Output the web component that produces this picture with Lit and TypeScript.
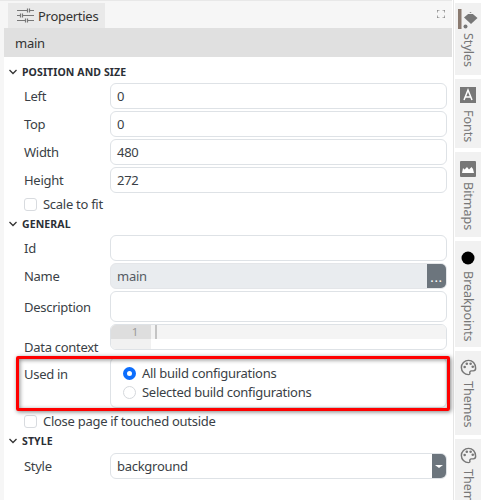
import { LitElement, html, css } from "lit";
import { customElement } from "lit/decorators.js";

const chevron = html`<svg class="chev" viewBox="0 0 10 10" width="10" height="10"><path d="M1.5 3l3.5 3.5L8.5 3" fill="none" stroke="#333" stroke-width="1.3"/></svg>`;
const palette = html`<svg viewBox="0 0 20 20" width="17" height="17"><path d="M10 1.6a8.4 8.4 0 1 0 0 16.8c1.3 0 1.9-.9 1.6-1.900-.4-1.300.3-2.500 1.800-2.500h2.200c1.600 0 2.800-1.200 2.800-3C18.400 5.300 14.700 1.600 10 1.600z" fill="none" stroke="#777" stroke-width="1.700"/><circle cx="5.500" cy="9.500" r="1.500" fill="#777"/><circle cx="8" cy="5.500" r="1.500" fill="#777"/><circle cx="12.500" cy="5.500" r="1.500" fill="#777"/><circle cx="15" cy="9" r="1.500" fill="#777"/></svg>`;

@customElement("app-root")
export class AppRoot extends LitElement {
  static styles = css`
    :host { display: block; width: 483px; height: 500px; overflow: hidden; position: relative; background: #fff; font-family: "Noto Sans", sans-serif; font-size: 13px; letter-spacing: -0.28px; color: #3a3f46; }
    .page { display: flex; height: 500px; }
    .main { width: 452px; flex: none; background: #f6f6f6; padding-top: 3px; box-sizing: border-box; display: flex; flex-direction: column; position: relative; }
    .topline { position: absolute; left: 0; right: 0; top: 0; height: 1px; background: #e8e8e8; }
    .tabs { height: 25px; flex: none; padding: 0 7px 0 8px; display: flex; align-items: stretch; justify-content: space-between; }
    .tab { width: 97px; background: #e9e9e9; display: flex; align-items: center; gap: 4px; padding-left: 9px; box-sizing: border-box; color: #333; }
    .expand { margin-top: 7px; }
    .body { margin-left: 4px; background: #fff; flex: 1; display: flex; flex-direction: column; min-height: 0; }
    .title { height: 29px; background: #e0e0e0; display: flex; align-items: center; padding-left: 11px; color: #333; flex: none; }
    .content { padding: 5px 5px 0 4px; display: flex; flex-direction: column; }
    .sec { height: 20px; display: flex; align-items: center; gap: 4px; font-weight: 700; font-size: 10.5px; letter-spacing: 0.1px; color: #2b2f36; }
    .form { display: grid; grid-template-columns: 102px 337px; row-gap: 2px; }
    .form.g1 { margin-top: 1px; }
    .form.g2 { margin-top: 2px; }
    .form label { padding-left: 16px; display: flex; align-items: center; color: #3a3f46; }
    .form label.bottom { align-items: flex-end; margin-bottom: -6px; }
    .form label.top { align-items: flex-start; padding-top: 8px; margin-top: 5px; }
    .inp { height: 26px; box-sizing: border-box; border: 1px solid #dee2e6; border-radius: 6px; padding-left: 6px; display: flex; align-items: center; background: #fff; color: #3a3f46; }
    .inp.tall { height: 31px; }
    .inp.ro { background: #e9ecef; border-color: #e4e6e9; overflow: hidden; padding-right: 0; justify-content: space-between; color: #555b63; }
    .dots { width: 19px; height: 26px; box-sizing: border-box; padding-top: 3px; background: #6c757d; color: #fff; display: flex; align-items: center; justify-content: center; font-size: 13px; letter-spacing: 0.6px; line-height: 1; flex: none; }
    .editor { height: 26px; box-sizing: border-box; border: 1px solid #dee2e6; border-radius: 6px; overflow: hidden; display: flex; background: #fff; }
    .gutter { width: 40px; background: #f1f1f1; flex: none; }
    .num { height: 14px; background: #dedede; color: #9a9a9a; font-size: 11.5px; text-align: right; padding-right: 13px; box-sizing: border-box; line-height: 14px; }
    .line { flex: 1; background: #f4f4f4; height: 14px; position: relative; }
    .line::before { content: ""; position: absolute; left: 4px; top: 0; width: 2px; height: 14px; background: #c4c4c4; }
    .radios { margin-top: 5px; height: 51px; box-sizing: border-box; border: 1px solid #dee2e6; border-radius: 6px; display: flex; flex-direction: column; justify-content: center; gap: 3px; padding-left: 12px; }
    .radio { display: flex; align-items: center; gap: 6px; height: 16px; }
    .dot { width: 13px; height: 13px; box-sizing: border-box; border: 1px solid #d5d8dc; border-radius: 50%; background: #fff; flex: none; }
    .dot.on { border: 4px solid #0d6efd; }
    .check { display: flex; align-items: center; gap: 6px; padding-left: 16px; height: 20px; }
    .check.c1 { margin-top: 1px; }
    .check.c2 { margin-top: 3px; }
    .cb { width: 13px; height: 13px; box-sizing: border-box; border: 1px solid #d8dbdf; border-radius: 3px; background: #fff; flex: none; }
    .sel { padding-right: 0; justify-content: space-between; overflow: hidden; }
    .caret { width: 14px; height: 26px; background: #6c757d; display: flex; align-items: center; justify-content: center; flex: none; }
    .caret::before { content: ""; border-left: 4px solid transparent; border-right: 4px solid transparent; border-top: 3px solid #fff; }
    .side { flex: 1; border-left: 1px solid #e6e6e6; margin-left: 1px; padding-left: 1px; display: flex; flex-direction: column; gap: 4px; padding-top: 3px; overflow: hidden; }
    .stab { background: #f1f1f1; width: 26px; flex: none; box-sizing: border-box; display: flex; flex-direction: column; align-items: center; padding-top: 8px; gap: 7px; color: #777; font-size: 12.5px; letter-spacing: 0; }
    .stab svg { flex: none; }
    .stab span { writing-mode: vertical-rl; line-height: 14px; }
    .s1 { height: 72px; padding-top: 6px; gap: 4px; }
    .s2 { height: 69px; }
    .s3 { height: 85px; padding-top: 9px; gap: 5px; }
    .s4 { height: 106px; padding-top: 10px; gap: 6px; }
    .s5 { height: 84px; gap: 5px; }
    .s6 { height: 70px; gap: 5px; }
    .annot { position: absolute; left: 16px; top: 356px; width: 434px; height: 55px; box-sizing: border-box; border: 3px solid #f00; border-radius: 2px; box-shadow: 1px 1px 4px rgba(0,0,0,.5), inset 1px 1px 4px rgba(0,0,0,.45); pointer-events: none; }
  `;

  private row(label: string, value: string) {
    return html`<label>${label}</label><div class="inp">${value}</div>`;
  }

  render() {
    return html`
      <div class="page">
        <div class="main">
          <div class="topline"></div>
          <div class="tabs">
            <div class="tab">
              <svg viewBox="0 0 17 15" width="17" height="15"><path d="M0 2.5h10M13 2.5h4M10.5 0.5v4M12.5 0.5v4M0 7.5h3M6 7.500h11M3.500 5.500v4M5.500 5.500v4M0 12.500h8M11 12.500h6M8.500 10.500v4M10.500 10.500v4" stroke="#777" stroke-width="1.200" fill="none"/></svg>
              Properties
            </div>
            <svg class="expand" viewBox="0 0 8 8" width="8" height="8"><path d="M0 2.500V0h2.500M5.500 0H8v2.500M8 5.500V8H5.500M2.500 8H0V5.500" fill="none" stroke="#777" stroke-width="1.200"/></svg>
          </div>
          <div class="body">
            <div class="title">main</div>
            <div class="content">
              <div class="sec">${chevron}POSITION AND SIZE</div>
              <div class="form g1">
                ${this.row("Left", "0")}
                ${this.row("Top", "0")}
                ${this.row("Width", "480")}
                ${this.row("Height", "272")}
              </div>
              <div class="check c1"><div class="cb"></div>Scale to fit</div>
              <div class="sec">${chevron}GENERAL</div>
              <div class="form g1">
                ${this.row("Id", "")}
                <label>Name</label>
                <div class="inp ro">main<div class="dots">...</div></div>
                <label>Description</label><div class="inp tall"></div>
                <label class="bottom">Data context</label>
                <div class="editor"><div class="gutter"><div class="num">1</div></div><div class="line"></div></div>
                <label class="top">Used in</label>
                <div class="radios">
                  <div class="radio"><div class="dot on"></div>All build configurations</div>
                  <div class="radio"><div class="dot"></div>Selected build configurations</div>
                </div>
              </div>
              <div class="check c2"><div class="cb"></div>Close page if touched outside</div>
              <div class="sec">${chevron}STYLE</div>
              <div class="form g2">
                <label>Style</label>
                <div class="inp sel">background<div class="caret"></div></div>
              </div>
            </div>
          </div>
        </div>
        <div class="side">
          <div class="stab s1">
            <svg viewBox="0 0 20 20" width="20" height="20"><rect x="0" y="0" width="3.500" height="20" fill="#8a7a70"/><path d="M12.500 3l7 6-6.500 6-7-6.500z" fill="#777"/><path d="M8.500 4.500h7" stroke="#f1f1f1"/><circle cx="7.500" cy="17.500" r="2" fill="#777"/></svg>
            <span>Styles</span>
          </div>
          <div class="stab s2">
            <svg viewBox="0 0 16 16" width="16" height="16"><rect width="16" height="16" fill="#777"/><path d="M4 13L8 3l4 10M5.500 10h5" stroke="#fff" stroke-width="1.500" fill="none"/></svg>
            <span>Fonts</span>
          </div>
          <div class="stab s3">
            <svg viewBox="0 0 16 16" width="16" height="16"><rect width="16" height="16" rx="1" fill="#777"/><path d="M2 12l1-5 1.500 1.500L7 6l2 2.500L11.500 6 13 8l1 4z" fill="#fff"/></svg>
            <span>Bitmaps</span>
          </div>
          <div class="stab s4">
            <svg viewBox="0 0 14 14" width="14" height="14"><circle cx="7" cy="7" r="6.500" fill="#000"/></svg>
            <span>Breakpoints</span>
          </div>
          <div class="stab s5">${palette}<span>Themes</span></div>
          <div class="stab s6">${palette}<span>Themes</span></div>
        </div>
        <div class="annot"></div>
      </div>
    `;
  }
}
